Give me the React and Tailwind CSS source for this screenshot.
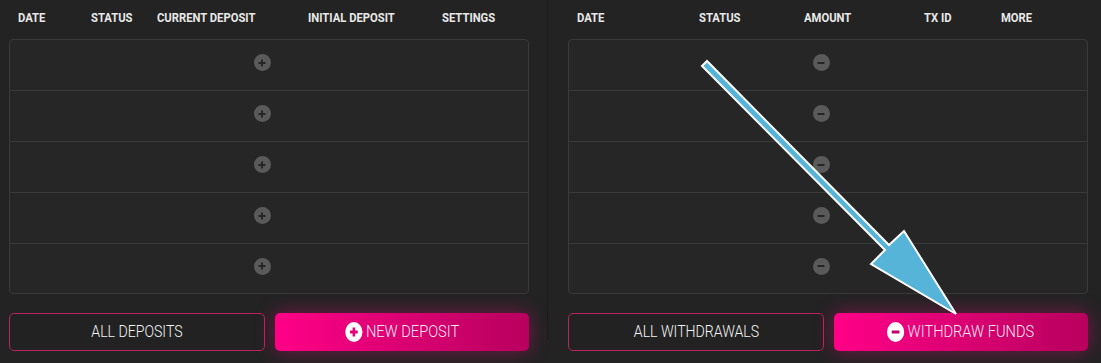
import { useState } from "react";

const font = { fontFamily: '"Roboto", "Liberation Sans", sans-serif' };

function RowIcon({ type }) {
  return (
    <span className="w-[17px] h-[17px] rounded-full bg-[#5a5a5a] flex items-center justify-center">
      {type === "plus" ? (
        <svg width="10" height="10" viewBox="0 0 10 10">
          <path d="M5 1.5v7M1.5 5h7" stroke="#262626" strokeWidth="2" />
        </svg>
      ) : (
        <svg width="10" height="10" viewBox="0 0 10 10">
          <path d="M1.5 5h7" stroke="#262626" strokeWidth="2" />
        </svg>
      )}
    </span>
  );
}

function BtnIcon({ type }) {
  return (
    <span className="w-[20px] h-[20px] rounded-full bg-white flex items-center justify-center">
      <svg width="12" height="12" viewBox="0 0 12 12">
        {type === "plus" ? (
          <path d="M6 1.5v9M1.5 6h9" stroke="#e6007a" strokeWidth="3" />
        ) : (
          <path d="M1.5 6h9" stroke="#c4006a" strokeWidth="3" />
        )}
      </svg>
    </span>
  );
}

function Panel({ cols, icon, outline, primary, className }) {
  const [rows] = useState([0, 1, 2, 3, 4]);
  return (
    <div className={className}>
      <div className="flex h-[36px] pl-[9px] items-center text-[12.5px] font-bold text-[#e8e8e8] uppercase" style={font}>
        {cols.map(c => (
          <div key={c.label} style={{ width: c.w }} className="shrink-0">
            <span className="inline-block origin-left scale-x-[0.9] whitespace-nowrap">{c.label}</span>
          </div>
        ))}
      </div>
      <div className="w-[520px] mt-[3px] border border-[#3a3a3a] rounded-[4px] bg-[#262626]">
        {rows.map(r => (
          <div key={r} className={"flex items-center justify-center pr-[14px] pb-[5px] " + (r < 4 ? "h-[51px] border-b border-[#3a3a3a]" : "h-[49px] pb-[3px]")}>
            <RowIcon type={icon} />
          </div>
        ))}
      </div>
      <div className="flex gap-[10px] mt-[19px] w-[520px]" style={font}>
        <button className="flex-1 h-[38px] rounded-[5px] border border-[#c0205f] text-[17px] font-light text-[#f5f5f5] bg-[#222222]">
          <span className="inline-block scale-x-[0.83] whitespace-nowrap">{outline}</span>
        </button>
        <button className="flex-1 h-[38px] rounded-[5px] text-[17px] font-light text-[#ffe6f2] flex items-center justify-center bg-gradient-to-r from-[#ff0087] to-[#b8005e] shadow-[0_0_20px_rgba(255,0,128,0.4)]">
          <span className="inline-flex items-center gap-[4px] scale-x-[0.86] whitespace-nowrap">
            <BtnIcon type={icon} />
            {primary}
          </span>
        </button>
      </div>
    </div>
  );
}

export default function App() {
  return (
    <div className="relative w-[1101px] h-[363px] bg-[#232323] flex overflow-hidden">
      <Panel
        className="w-[548px] pl-[9px] border-r border-[#1b1b1b] h-[340px] shrink-0"
        icon="plus"
        outline="ALL DEPOSITS"
        primary="NEW DEPOSIT"
        cols={[
          { label: "Date", w: 73 },
          { label: "Status", w: 66 },
          { label: "Current Deposit", w: 151 },
          { label: "Initial Deposit", w: 134 },
          { label: "Settings", w: 80 },
        ]}
      />
      <Panel
        className="pl-[20px]"
        icon="minus"
        outline="ALL WITHDRAWALS"
        primary="WITHDRAW FUNDS"
        cols={[
          { label: "Date", w: 122 },
          { label: "Status", w: 105 },
          { label: "Amount", w: 120 },
          { label: "TX ID", w: 77 },
          { label: "More", w: 80 },
        ]}
      />
      <svg className="absolute left-0 top-0 pointer-events-none" width="1101" height="363" viewBox="0 0 1101 363">
        <path
          d="M702 66 L707 61 L889 245 L904 231 L956 314 L871 264 L885 250 Z"
          fill="#56b4d9"
          stroke="#ffffff"
          strokeWidth="2"
          strokeLinejoin="miter"
        />
      </svg>
    </div>
  );
}
